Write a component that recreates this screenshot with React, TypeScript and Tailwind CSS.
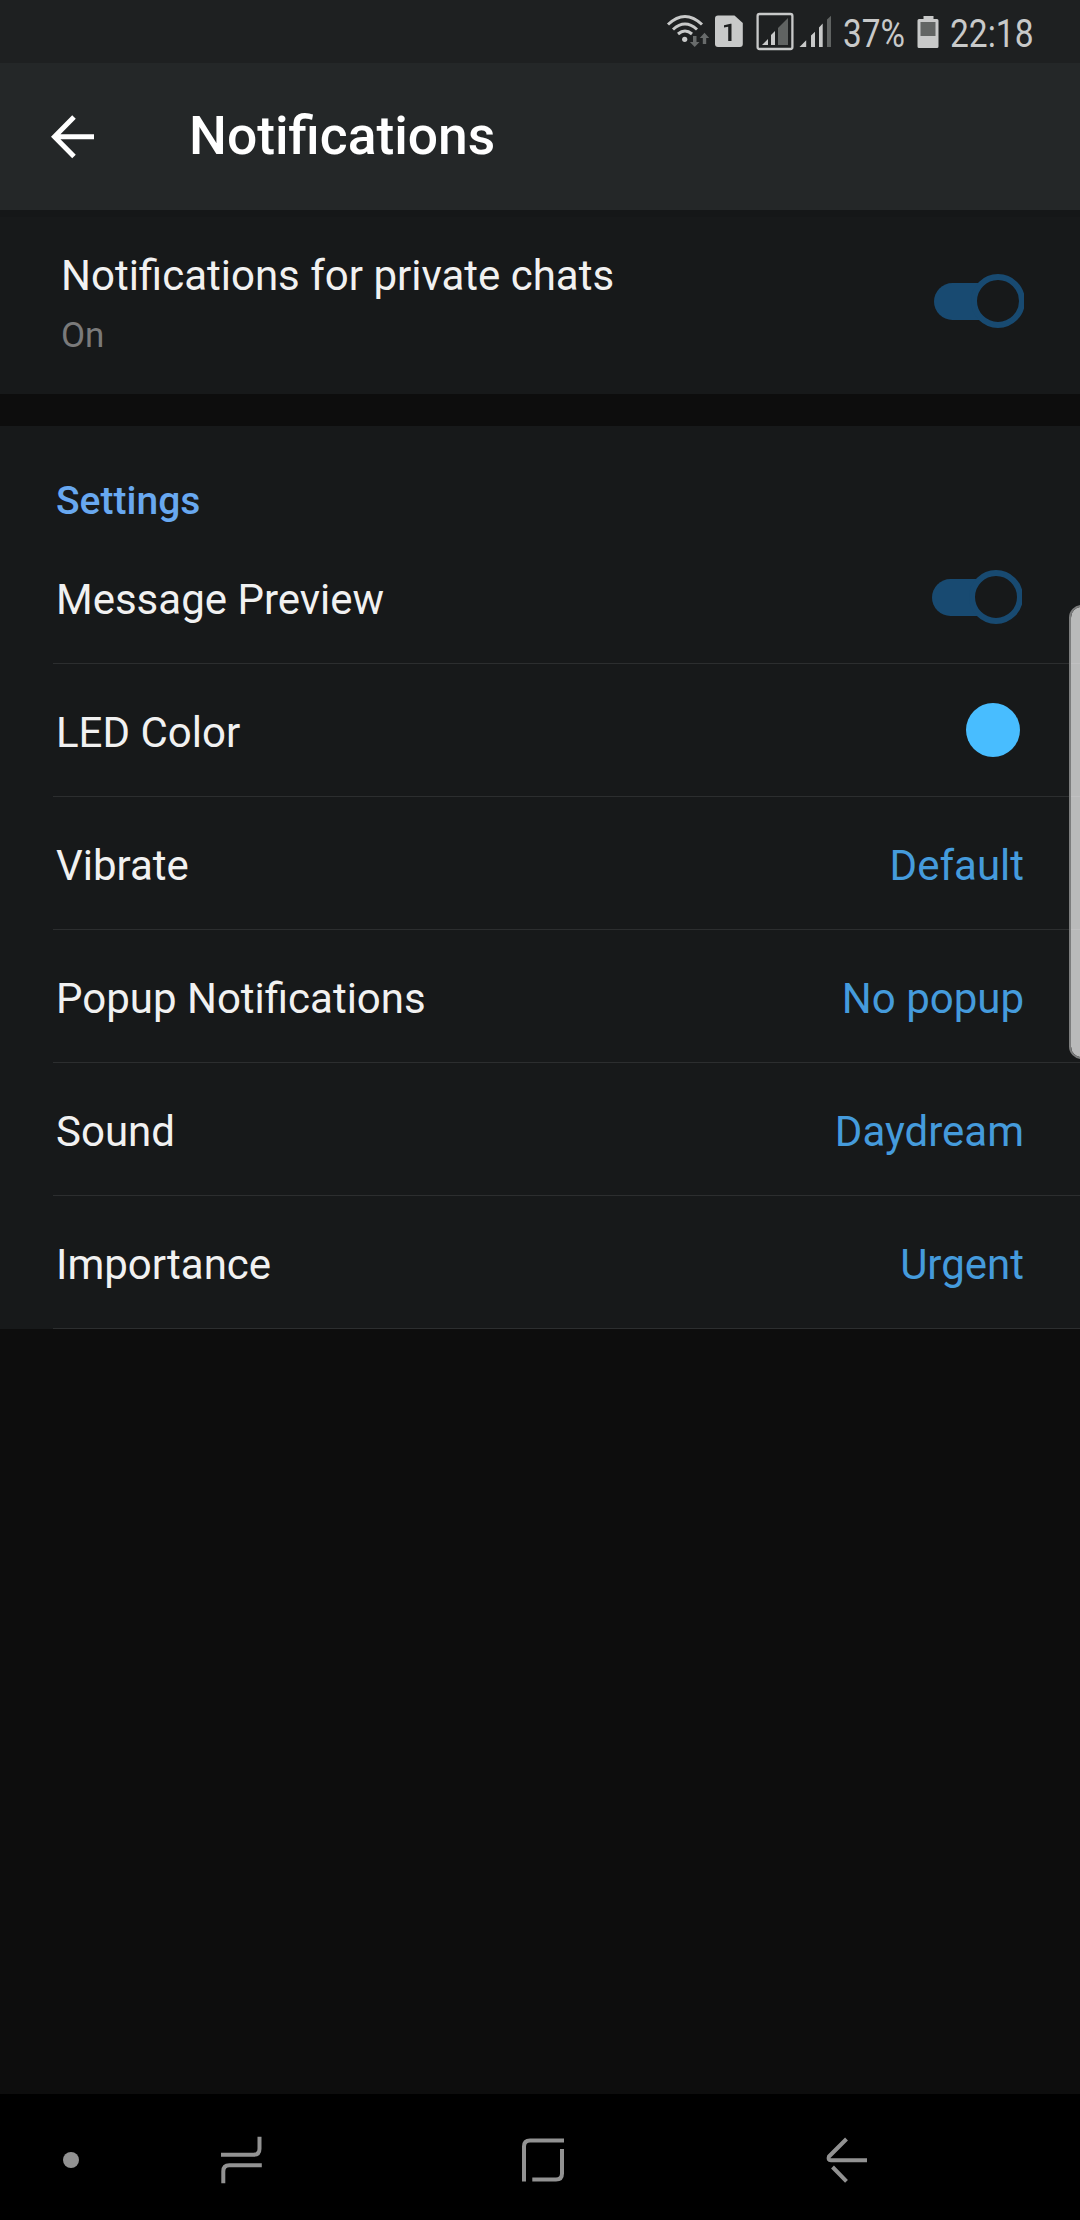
import type { ReactNode } from 'react'

type Row = {
  label: string
  value: ReactNode
}

function Switch() {
  return (
    <svg width="90" height="56" viewBox="0 0 90 56" className="block shrink-0">
      <rect x="0" y="10" width="70" height="37" rx="18.5" fill="#184a71" />
      <circle cx="64" cy="28" r="24" fill="#17191a" stroke="#184a71" strokeWidth="6" />
    </svg>
  )
}

function Value({ children }: { children: ReactNode }) {
  return <span className="text-[#459bdc] mt-[5px] -mr-[1px]">{children}</span>
}

const rows: Row[] = [
  { label: 'Message Preview', value: <span className="mr-[1px]"><Switch /></span> },
  { label: 'LED Color', value: <span className="w-[54px] h-[54px] rounded-full bg-[#48bdff] mr-[3px]" /> },
  { label: 'Vibrate', value: <Value>Default</Value> },
  { label: 'Popup Notifications', value: <Value>No popup</Value> },
  { label: 'Sound', value: <Value>Daydream</Value> },
  { label: 'Importance', value: <Value>Urgent</Value> },
]

function StatusIcons() {
  return (
    <svg width="184" height="63" viewBox="650 0 184 63" fill="none" className="block shrink-0">
      {/* wifi */}
      <g stroke="#c8c9c9" strokeWidth="3">
        <path d="M668 24.5Q685 8.500 702 24.500" />
        <path d="M673 29.500Q685 18.500 697 29.500" />
        <path d="M678 34Q685 28 692 34" />
      </g>
      <circle cx="684.700" cy="39.300" r="2.600" fill="#c8c9c9" />
      <path d="M693 36h3.500v6h3l-4.800 5-4.800-5h3.100zM702.800 44v-6h-3l4.700-5.200 4.700 5.200h-3v6z" fill="#686b6b" />
      {/* sim */}
      <path d="M718 15.500h16.500l8.300 7.500v21q0 3-3 3H718q-3 0-3-3V18.500q0-3 3-3z" fill="#c8c9c9" />
      <path d="M724 27.500v-2.300l6.500-1.400h1V41h-3.300V26.800z" fill="#1e2021" />
      {/* boxed signal */}
      <rect x="757.600" y="14" width="34.800" height="35" rx="2" stroke="#c8c9c9" strokeWidth="2.300" />
      <path d="M762 45l6-6v6zM771 45V35l4-4v14z" fill="#c8c9c9" />
      <path d="M778 45V28l10-10v27z" fill="#606362" />
      {/* signal */}
      <path d="M799.500 47l6.700-6.700V47zM811 47V35.500l4-3.700V47zM819 47V27.500l3.700-4V47z" fill="#c8c9c9" />
      <path d="M827 47V19.500l4-3.700V47z" fill="#606362" />
    </svg>
  )
}

function StatusBar() {
  return (
    <div className="h-[63px] bg-[#1e2021] flex items-center pl-[650px] text-[39px] leading-[63px] text-[#c8c9c9] whitespace-nowrap">
      <StatusIcons />
      <span className="ml-[9px] mt-[5px] w-[62px]">
        <span className="block origin-left scale-x-[0.855]">37%</span>
      </span>
      <svg width="22" height="63" viewBox="916.500 0 22 63" className="ml-[11.500px] block shrink-0">
        <path d="M923 16h10v3h3.500q1.500 0 1.500 1.500v26q0 1.500-1.500 1.500h-18q-1.500 0-1.500-1.500v-26q0-1.500 1.500-1.500h4.500z" fill="#c8c9c9" />
        <path d="M920 22h15v14h-15z" fill="#626564" />
      </svg>
      <span className="ml-[11px] mt-[5px] w-[84px]">
        <span className="block origin-left scale-x-[0.86]">22:18</span>
      </span>
    </div>
  )
}

function NavBar() {
  return (
    <nav className="h-[126px] bg-black flex items-center">
      <span className="ml-[63px] mt-[6px] w-4 h-4 rounded-full bg-[#929292]" />
      <svg width="44" height="50" viewBox="220 2135 44 50" fill="none" stroke="#929292" strokeWidth="4" className="ml-[141px] mt-[6px]">
        <path d="M221 2154.700h32.500q6 0 6-6v-12M261.800 2165.300h-32.500q-6 0-6 6v12" />
      </svg>
      <svg width="44" height="46" viewBox="521 2137 44 46" fill="none" stroke="#929292" strokeWidth="4" className="ml-[257px] mt-[6px]">
        <path d="M524 2181.500V2146.500q0-6 6-6h34M562 2149v24.500q0 6-6 6h-23.700" />
      </svg>
      <svg width="44" height="48" viewBox="825 2136 44 48" fill="none" stroke="#929292" strokeWidth="4" className="ml-[260px] mt-[6px]">
        <path d="M846.500 2139l-17.500 17.500q-1.500 3.700 2 3.700h36M832.500 2167l14 14.300" />
      </svg>
    </nav>
  )
}

export default function App() {
  return (
    <div className="relative w-[1080px] h-[2220px] overflow-hidden flex flex-col bg-[#0d0d0d] font-['Roboto',sans-serif] text-[42px] leading-[50px] text-[#f1f1f1]">
      <StatusBar />

      <header className="h-[147px] bg-[#242728] flex items-center pl-[51px] text-white">
        <svg width="44" height="44" viewBox="0 0 44 44" fill="none" stroke="currentColor" strokeWidth="5">
          <path d="M23 2L3.500 21.800L23 41.500M3 21.800h40" />
        </svg>
        <h1 className="ml-[94px] mb-[1px] text-[53.4px] leading-[64px] font-medium">Notifications</h1>
      </header>

      <section className="h-[184px] bg-[#17191a] flex justify-between pl-[61px] pr-[56px] border-t-[7px] border-[#151718]">
        <div className="pt-[34px]">
          <p>Notifications for private chats</p>
          <p className="mt-[14px] text-[35px] leading-[42px] text-[#7a7a7a]">On</p>
        </div>
        <div className="pt-[56px]">
          <Switch />
        </div>
      </section>

      <section className="mt-[32px] bg-[#17191a]">
        <h2 className="h-[105px] pt-[52px] pl-[56px] text-[39px] leading-[46px] font-medium text-[#68a8f0]">Settings</h2>
        {rows.map((row) => (
          <div key={row.label} className="h-[133px] ml-[53px] pl-[3px] pr-[57px] flex items-center justify-between border-b border-[#2c2e2f]">
            <span className="mt-[5px]">{row.label}</span>
            {row.value}
          </div>
        ))}
      </section>

      <div className="flex-1" />
      <NavBar />

      {/* edge panel handle, dividers show faintly through it */}
      <div className="absolute top-[605px] right-[-14px] w-[25px] h-[454px] rounded-[14px] bg-white/70 bg-clip-padding border-2 border-[#7c7d7d]" />
    </div>
  )
}
